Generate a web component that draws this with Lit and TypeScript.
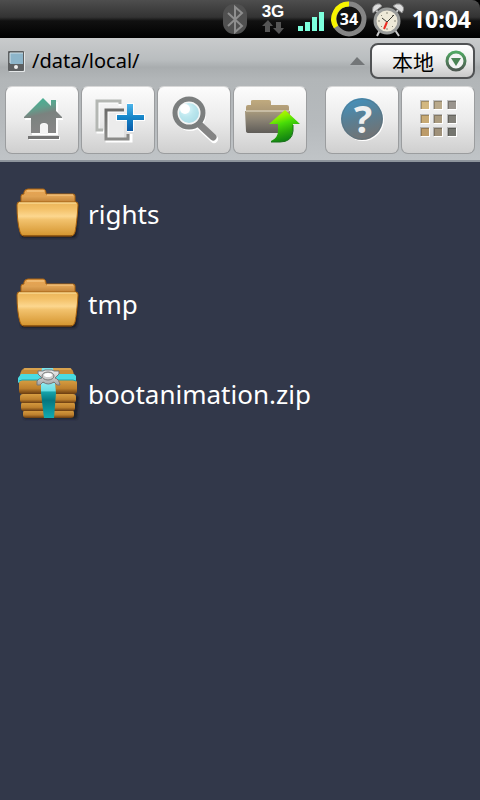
import { LitElement, html, css, svg } from "lit";
import { customElement, property } from "lit/decorators.js";

const homeIcon = html`<svg viewBox="0 0 74 68" width="74" height="68" aria-hidden="true">
  <defs><linearGradient id="roof" x1="0" y1="0" x2=".25" y2="1">
    <stop offset="0" stop-color="#3cb897"/><stop offset=".35" stop-color="#5fa08c"/><stop offset=".55" stop-color="#7b827f"/><stop offset="1" stop-color="#858585"/>
  </linearGradient></defs>
  <g fill="#fff" transform="translate(1 2)"><path d="M38 12 57 31V32H52V47H26V32H19V31ZM46 14H52V24H46ZM23 49H54V52H23Z"/></g>
  <path fill="url(#roof)" d="M38 12 46 20V14H51V25L57 31V32H51V47H43V40Q43 37 39 37Q35 37 35 40V47H26V32H19V31Z"/>
  <path fill="#f4f4f4" d="M35 48V41Q35 38 39 38Q43 38 43 41V48Z"/>
  <path fill="#757575" d="M23 50H54V53H23Z"/>
</svg>`;

const multiIcon = html`<svg viewBox="0 0 74 68" width="74" height="68" aria-hidden="true">
  <defs><linearGradient id="plus" x1="0" y1="0" x2="0" y2="1"><stop offset="0" stop-color="#4db4ea"/><stop offset=".5" stop-color="#1585c8"/><stop offset="1" stop-color="#0a5aa8"/></linearGradient>
  <linearGradient id="sheet" x1="0" y1="0" x2="0" y2="1"><stop offset="0" stop-color="#6c6c6a"/><stop offset="1" stop-color="#8b8b89"/></linearGradient></defs>
  <path d="M23 46H17V16H39V20" fill="none" stroke="#fff" stroke-width="3"/>
  <path d="M22 44H16V15H39V18" fill="none" stroke="#b4b7b3" stroke-width="3"/>
  <path d="M25 24H43V56H25Z" fill="#ececec"/>
  <path d="M43 25H26V55H50V48" fill="none" stroke="#fff" stroke-width="3"/>
  <path d="M43 24H25V53H47V48" fill="none" stroke="url(#sheet)" stroke-width="3"/>
  <path d="M47 18H52V29H63V34H52V45H47V34H36V29H47Z" fill="#fff" stroke="#fff" stroke-width="2"/>
  <path d="M46 18H52V29H63V34H52V45H46V34H36V29H46Z" fill="url(#plus)"/>
</svg>`;

const searchIcon = html`<svg viewBox="0 0 74 68" width="74" height="68" aria-hidden="true">
  <defs><radialGradient id="lens" cx=".35" cy=".3" r=".8"><stop offset="0" stop-color="#e3faff"/><stop offset=".5" stop-color="#bce7ee"/><stop offset="1" stop-color="#a9dbe6"/></radialGradient></defs>
  <path d="M43 40 57 53" stroke="#fff" stroke-width="8" stroke-linecap="round"/>
  <circle cx="33" cy="29" r="16" fill="#fff"/>
  <path d="M42 38 56 51" stroke="#848484" stroke-width="7" stroke-linecap="round"/>
  <circle cx="32" cy="27" r="14" fill="#f4f6f6" stroke="#7b7e7e" stroke-width="5"/>
  <circle cx="32" cy="27" r="10" fill="url(#lens)"/>
  <circle cx="28" cy="23" r="5" fill="#fff"/>
</svg>`;

const upIcon = html`<svg viewBox="0 0 74 68" width="74" height="68" aria-hidden="true">
  <defs><linearGradient id="upf" x1="0" y1="0" x2="0" y2="1"><stop offset="0" stop-color="#a89a7c"/><stop offset=".4" stop-color="#8b8374"/><stop offset="1" stop-color="#5f5c58"/></linearGradient>
  <linearGradient id="tab" x1="0" y1="0" x2="0" y2="1"><stop offset="0" stop-color="#c0aa7e"/><stop offset="1" stop-color="#a69474"/></linearGradient>
  <linearGradient id="arrow" x1="0" y1="0" x2=".3" y2="1"><stop offset="0" stop-color="#d8f800"/><stop offset=".3" stop-color="#8cf000"/><stop offset=".5" stop-color="#48dc08"/><stop offset=".75" stop-color="#2cab0a"/><stop offset="1" stop-color="#128512"/></linearGradient></defs>
  <path d="M13 28V21Q13 19 15 19H18V15Q18 14 20 14H36Q38 14 38 16V19H54Q56 19 56 21V28Z" fill="url(#tab)"/>
  <path d="M12 25H57V44Q57 47 54 47H16Q13 47 13 45Z" fill="url(#upf)"/>
  <path d="M13 25H56" stroke="#e5dfce" stroke-width="1"/>
  <path d="M52 24 67 38H60V44Q59 56 47 56H38V55Q45 52 45 45V38H36Z" fill="url(#arrow)"/>
  <path d="M60 39V45Q59 56 47 56H38" fill="none" stroke="#197019"/>
</svg>`;

const helpIcon = html`<svg viewBox="0 0 74 68" width="74" height="68" aria-hidden="true">
  <defs><linearGradient id="help" x1=".3" y1="0" x2=".6" y2="1"><stop offset="0" stop-color="#4391bd"/><stop offset=".5" stop-color="#5b7e91"/><stop offset="1" stop-color="#747271"/></linearGradient></defs>
  <circle cx="38" cy="34" r="21" fill="#fff"/>
  <circle cx="37" cy="33" r="21" fill="url(#help)"/>
  <circle cx="37" cy="33" r="20" fill="none" stroke="#52707f" stroke-opacity=".5"/>
  <text x="38" y="47" class="question" text-anchor="middle">?</text>
</svg>`;

const dotColors = ["#d3b880", "#b9a98a", "#9a958e", "#c8aa74", "#ab9c80", "#828079", "#bd9c6a", "#9f917a", "#74756f"];
const gridIcon = html`<svg viewBox="0 0 74 68" width="74" height="68" aria-hidden="true">
  ${dotColors.map((c, i) => {
    const x = 20 + (i % 3) * 14 - (i % 3 ? 1 : 0), y = 15 + Math.floor(i / 3) * 14 - (i > 5 ? 1 : 0);
    return svg`<rect x=${x} y=${y} width="9" height="9" fill="#fff"/><rect x=${x} y=${y} width="8" height="8" fill=${c}/><path d="M${x} ${y + 8}V${y}H${x + 8}" fill="none" stroke="#000" stroke-opacity=".22" stroke-width="2"/>`;
  })}
</svg>`;

const folderIcon = html`<svg viewBox="0 0 64 56" width="64" height="56" aria-hidden="true">
  <defs><linearGradient id="front" x1="0" y1="0" x2="0" y2="1"><stop offset="0" stop-color="#eab458"/><stop offset=".2" stop-color="#f3c067"/><stop offset=".42" stop-color="#fcd78f"/><stop offset=".52" stop-color="#f2c26d"/><stop offset="1" stop-color="#d4942e"/></linearGradient>
  <linearGradient id="back" x1="0" y1="0" x2="0" y2="1"><stop offset="0" stop-color="#e8a552"/><stop offset=".5" stop-color="#dfa253"/><stop offset="1" stop-color="#b97a30"/></linearGradient>
  <filter id="soft"><feGaussianBlur stdDeviation="1"/></filter></defs>
  <path d="M3 18H63L61 49Q60 52 57 52H8Q5 52 5 49Z" fill="#1a1d28" filter="url(#soft)"/>
  <path d="M5 18V10Q5 8 8 8V6Q9 3 12 3H27Q30 3 30 8H57Q59 8 59 10V18Z" fill="url(#back)" stroke="#a96310"/>
  <path d="M11 5H28M31 9H57" stroke="#f9cf8e" stroke-width="1"/>
  <path d="M3 16H60Q62 16 62 19Q61 36 59 46Q58 50 55 50H8Q5 50 4 46Q1 36 1 19Q1 16 3 16Z" fill="url(#front)" stroke="#a96310"/>
  <path d="M3 17H60" stroke="#ffe8a8"/>
  <path d="M7 50H56" stroke="#6d3c08"/>
</svg>`;

const zipIcon = html`<svg viewBox="0 0 64 56" width="64" height="56" aria-hidden="true">
  <defs><linearGradient id="lid" x1="0" y1="0" x2="0" y2="1"><stop offset="0" stop-color="#d89e42"/><stop offset=".6" stop-color="#bd802d"/><stop offset="1" stop-color="#6a3c10"/></linearGradient>
  <linearGradient id="ribbon" x1="0" y1="0" x2="0" y2="1"><stop offset="0" stop-color="#8fe9ee"/><stop offset=".22" stop-color="#6adde3"/><stop offset=".26" stop-color="#16a3aa"/><stop offset=".5" stop-color="#057780"/><stop offset="1" stop-color="#10abb2"/></linearGradient>
  <linearGradient id="metal" x1="0" y1="0" x2="0" y2="1"><stop offset="0" stop-color="#eee"/><stop offset="1" stop-color="#a4a6a8"/></linearGradient>
  <filter id="haze"><feGaussianBlur stdDeviation="1"/></filter></defs>
  <path d="M6 30H63L61 53H8Z" fill="#1e222e" filter="url(#haze)"/>
  <path d="M9 2H54Q57 3 58 9V16H4V9Q5 3 9 2Z" fill="#c88d38"/>
  <path d="M8 3H55" stroke="#e9b765"/>
  <rect x="7" y="44" width="51" height="8" rx="3" fill="url(#lid)"/>
  <rect x="5" y="36" width="54" height="9" rx="3" fill="url(#lid)"/>
  <rect x="4" y="28" width="56" height="9" rx="3" fill="url(#lid)"/>
  <rect x="3" y="14" width="58" height="14" rx="3" fill="url(#lid)"/>
  <path d="M5 8H58L60 10V15L57 14H6L2 17V12Z" fill="#4adbe2"/>
  <path d="M3 15 6 14H57L60 15" fill="none" stroke="#1aa0aa"/>
  <path d="M26 2H37L38 8H25Z" fill="#7ce3ea"/>
  <path d="M25 17H39L40 27 38 52H28L25 27Z" fill="url(#ribbon)"/>
  <path d="M21 19V15Q23 12 26 12L22 8V5H27L29 4H36L38 5H43V8L39 12Q43 13 44 19H41L38 16Q32 20 27 16L24 19Z" fill="url(#metal)" stroke="#74777b"/>
  <ellipse cx="32" cy="10" rx="6" ry="4" fill="#ccc" stroke="#777"/>
  <ellipse cx="32" cy="9" rx="4" ry="2" fill="#fff"/>
</svg>`;

@customElement("status-bar")
class StatusBar extends LitElement {
  static styles = css`
    :host { display: flex; align-items: center; justify-content: flex-end; height: 38px; box-sizing: border-box; padding-right: 9px;
      background: linear-gradient(#4e4e4e, #333 45%, #111 55%, #000); border-top-right-radius: 8px; color: #fff; }
    svg { display: block; flex: none; }
    .mobile { font: bold 17px/20px "Liberation Sans", sans-serif; fill: #fff; }
    .level { font: bold 16px/20px "Open Sans", sans-serif; fill: #fff; }
    time { font: bold 23px/38px "Open Sans", "Noto Sans", sans-serif; margin-left: 6px; }
  `;
  render() {
    return html`
      <svg width="122" height="38" viewBox="220 0 122 38" role="img" aria-label="Bluetooth, 3G, signal">
        <rect x="223" y="4" width="24" height="30" rx="11" fill="#505050"/>
        <path d="M228 13 242 26 235 32V7L242 13 228 26" fill="none" stroke="#8e8e8e" stroke-width="2"/>
        <text x="273" y="17" text-anchor="middle" class="mobile">3G</text>
        <path d="M268 20 273 26H270V32H265V26H262ZM276 22H281V28H284L279 34 273 28H276Z" fill="#555"/>
        <path d="M298 26H303V31H298ZM305 22H310V31H305ZM312 17H317V31H312ZM319 12H324V31H319Z" fill="#7dffdc"/>
      </svg>
      <svg width="64" height="38" viewBox="342 0 64 38" overflow="visible" role="img" aria-label="Battery 34, alarm set">
        <circle cx="349" cy="19" r="15" fill="#111" stroke="#858585" stroke-width="5"/>
        <path d="M349 4A15 15 0 0 0 336 27" fill="none" stroke="#f8f400" stroke-width="5"/>
        <text x="349" y="25" text-anchor="middle" class="level">34</text>
        <path d="M380 30 377 36M395 30 399 36M376 10 379 14M398 10 395 14" stroke="#ccc" stroke-width="2"/>
        <path d="M373 13Q371 6 377 4Q380 3 382 6ZM402 13Q406 7 400 4Q396 3 393 6Z" fill="#ddd" stroke="#888"/>
        <circle cx="387" cy="21" r="12" fill="#eee9d8" stroke="#999b9a" stroke-width="3"/>
        <g stroke="#8a8878" stroke-width="1"><path d="M387 12V14M387 28V30M378 21H380M394 21H396M381 15 382 16M393 15 392 16M381 27 382 26M393 27 392 26"/></g>
        <path d="M382 18 387 22 394 15" fill="none" stroke="#3b3b35" stroke-width="1"/>
        <path d="M387 22 384 29" stroke="#ed2d22" stroke-width="2"/>
      </svg>
      <time>10:04</time>`;
  }
}

@customElement("file-row")
class FileRow extends LitElement {
  @property() name = "";
  @property() kind = "folder";
  static styles = css`
    :host { display: block; }
    a { display: flex; align-items: center; gap: 8px; height: 90px; padding: 0 16px; color: #fff; text-decoration: none;
      font: 26px/36px "Noto Sans", "Open Sans", sans-serif; }
    svg { display: block; flex: none; }
  `;
  render() {
    return html`<a href="#${this.name}">${this.kind === "zip" ? zipIcon : folderIcon}<span>${this.name}</span></a>`;
  }
}

@customElement("app-root")
class AppRoot extends LitElement {
  static styles = css`
    :host { display: block; min-height: 100vh; background: #32384a; font-family: "Noto Sans", "Open Sans", sans-serif; }
    .top { background: #000; }
    header { box-sizing: border-box; height: 124px; padding: 4px 5px 0; border-bottom: 2px solid #8d949c;
      background: linear-gradient(#c9cbcc, #b9bdbf 18%, #a9adaf 24%, #b2b6b8 34%, #b6babd 70%, #c0c4c7); }
    .location { display: flex; align-items: center; height: 38px; }
    svg { display: block; flex: none; }
    .path { flex: 1; padding-left: 7px; font-size: 20px; line-height: 38px; color: #000; }
    .place { display: flex; align-items: center; justify-content: flex-end; gap: 10px; width: 105px; height: 36px; padding: 0 5px; margin-left: 5px;
      border: 2px solid #505254; border-radius: 8px; background: linear-gradient(#fff, #eee 50%, #c9c9c9); color: #000;
      font: 21px/28px "Noto Sans CJK SC", sans-serif; white-space: nowrap; }
    nav { display: flex; gap: 2px; padding-top: 6px; }
    .tool { flex: 1; display: flex; justify-content: center; align-items: center; height: 68px; padding: 0; box-sizing: border-box; min-width: 0;
      border: 1px solid #9b9d9f; border-top-color: #d8d8d8; border-radius: 7px; background: linear-gradient(#fcfcfc, #ebebeb 50%, #cfcfcf); }
    .gap { width: 14px; }
    .question { font: bold 38px "Open Sans", sans-serif; fill: #f0f0f0; }
    ul { list-style: none; margin: 0; padding: 7px 0 0; }
  `;
  render() {
    return html`
      <div class="top"><status-bar></status-bar></div>
      <header>
        <div class="location">
          <svg width="20" height="24" viewBox="5 0 20 24" aria-hidden="true">
            <rect x="9" y="3" width="16" height="20" rx="1" fill="#e4e7e8"/>
            <rect x="8" y="2" width="16" height="20" rx="1" fill="#5d6062"/>
            <rect x="10" y="4" width="13" height="11" fill="#8db5ca"/>
            <path d="M10 14V4H23" fill="none" stroke="#d0e0e7"/>
            <circle cx="16" cy="18" r="2" fill="#eee"/>
          </svg>
          <span class="path">/data/local/</span>
          <svg width="15" height="10" viewBox="0 0 15 10" aria-hidden="true"><path d="M7 1 15 9H0Z" fill="#737678"/></svg>
          <button class="place">本地
            <svg width="24" height="24" viewBox="0 0 24 24" aria-hidden="true">
              <defs><linearGradient id="ring" x1="0" y1="0" x2="0" y2="1"><stop offset="0" stop-color="#50a762"/><stop offset="1" stop-color="#4e5951"/></linearGradient></defs>
              <circle cx="12" cy="12" r="9" fill="#f4f4f4" stroke="url(#ring)" stroke-width="3"/>
              <path d="M7 9H17L12 17Z" fill="#4b8455"/>
            </svg>
          </button>
        </div>
        <nav>
          <button class="tool" aria-label="Home">${homeIcon}</button>
          <button class="tool" aria-label="Multi-select">${multiIcon}</button>
          <button class="tool" aria-label="Search">${searchIcon}</button>
          <button class="tool" aria-label="Up">${upIcon}</button>
          <span class="gap"></span>
          <button class="tool" aria-label="Help">${helpIcon}</button>
          <button class="tool" aria-label="Menu">${gridIcon}</button>
        </nav>
      </header>
      <ul>
        <li><file-row name="rights"></file-row></li>
        <li><file-row name="tmp"></file-row></li>
        <li><file-row name="bootanimation.zip" kind="zip"></file-row></li>
      </ul>`;
  }
}
